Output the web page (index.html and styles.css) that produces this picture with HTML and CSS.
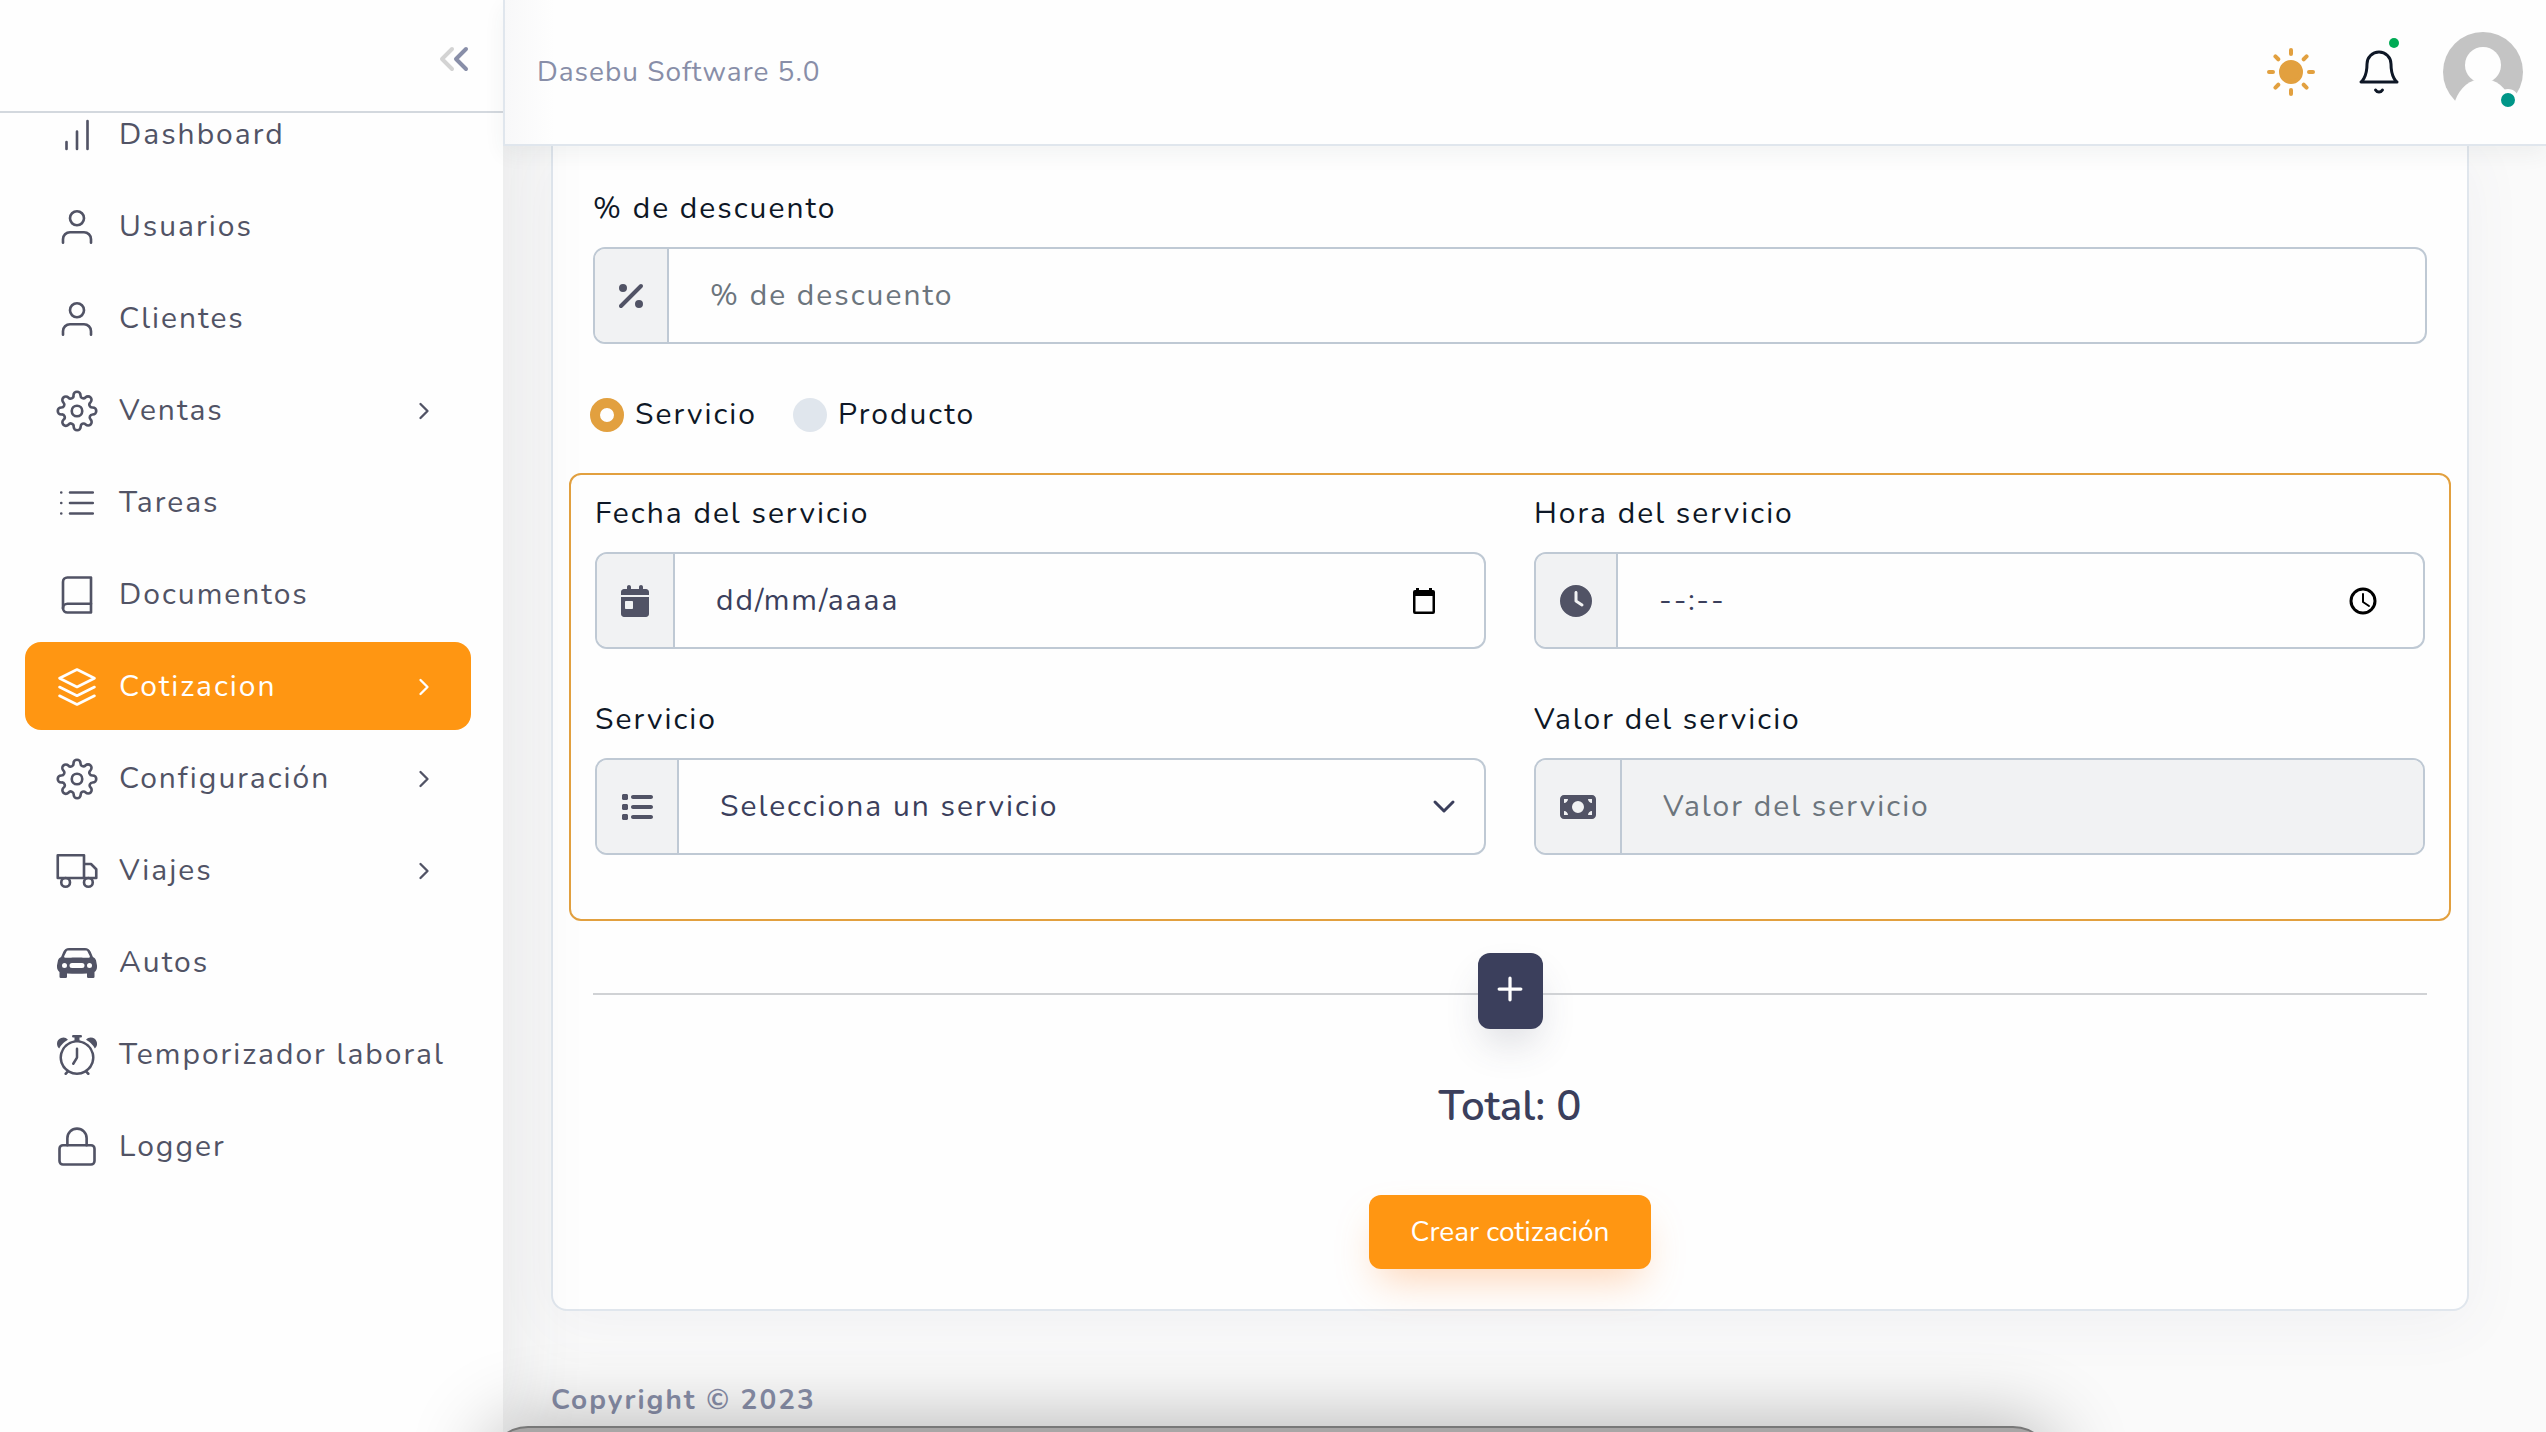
FILE: index.html
```html
<!DOCTYPE html>
<html lang="es">
<head>
<meta charset="utf-8">
<meta name="viewport" content="width=device-width, initial-scale=1">
<title>Cotización - Dasebu Software</title>
<link rel="stylesheet" href="styles.css">
</head>
<body>
<div class="layout">
  <aside class="sidebar">
    <div class="sidebar-head">
      <button class="icon-button collapse" type="button" aria-label="Contraer menú">
        <svg class="icon-lg" viewBox="0 0 24 24"><path class="collapse-far" d="M11 17 6 12l5-5"/><path d="M18 17l-5-5 5-5"/></svg>
      </button>
    </div>
    <nav class="menu">
      <a class="menu-item" href="#"><svg class="icon" viewBox="0 0 24 24"><path d="M12 20V10M18 20V4M6 20v-4"/></svg><span>Dashboard</span></a>
      <a class="menu-item" href="#"><svg class="icon" viewBox="0 0 24 24"><path d="M20 21v-2a4 4 0 0 0-4-4H8a4 4 0 0 0-4 4v2"/><circle cx="12" cy="7" r="4"/></svg><span>Usuarios</span></a>
      <a class="menu-item" href="#"><svg class="icon" viewBox="0 0 24 24"><path d="M20 21v-2a4 4 0 0 0-4-4H8a4 4 0 0 0-4 4v2"/><circle cx="12" cy="7" r="4"/></svg><span>Clientes</span></a>
      <a class="menu-item" href="#"><svg class="icon" viewBox="0 0 24 24"><circle cx="12" cy="12" r="3"/><path d="M19.4 15a1.65 1.65 0 0 0 .33 1.82l.06.06a2 2 0 1 1-2.83 2.83l-.06-.06a1.65 1.65 0 0 0-2.8 1.18V21a2 2 0 0 1-4 0v-.09a1.65 1.65 0 0 0-2.98-1.09l-.06.06a2 2 0 1 1-2.83-2.83l.06-.06A1.65 1.65 0 0 0 3.09 14H3a2 2 0 0 1 0-4h.09A1.65 1.65 0 0 0 4.27 7.18l-.06-.06a2 2 0 1 1 2.83-2.83l.06.06A1.65 1.65 0 0 0 10 3.09V3a2 2 0 0 1 4 0v.09a1.65 1.65 0 0 0 2.82 1.18l.06-.06a2 2 0 1 1 2.83 2.83l-.06.06A1.65 1.65 0 0 0 20.91 10H21a2 2 0 0 1 0 4h-.09a1.65 1.65 0 0 0-1.51 1z"/></svg><span>Ventas</span><svg class="icon-sm" viewBox="0 0 24 24"><path d="m9 18 6-6-6-6"/></svg></a>
      <a class="menu-item" href="#"><svg class="icon" viewBox="0 0 24 24"><path d="M8 6h13M8 12h13M8 18h13M3 6h.01M3 12h.01M3 18h.01"/></svg><span>Tareas</span></a>
      <a class="menu-item" href="#"><svg class="icon" viewBox="0 0 24 24"><path d="M4 19.5A2.5 2.5 0 0 1 6.500 17H20"/><path d="M6.500 2H20v20H6.500A2.500 2.500 0 0 1 4 19.500v-15A2.500 2.500 0 0 1 6.500 2z"/></svg><span>Documentos</span></a>
      <a class="menu-item active" href="#" aria-current="page"><svg class="icon" viewBox="0 0 24 24"><path d="M12 2 2 7l10 5 10-5-10-5zM2 17l10 5 10-5M2 12l10 5 10-5"/></svg><span>Cotizacion</span><svg class="icon-sm" viewBox="0 0 24 24"><path d="m9 18 6-6-6-6"/></svg></a>
      <a class="menu-item" href="#"><svg class="icon" viewBox="0 0 24 24"><circle cx="12" cy="12" r="3"/><path d="M19.4 15a1.65 1.65 0 0 0 .33 1.82l.06.06a2 2 0 1 1-2.83 2.83l-.06-.06a1.65 1.65 0 0 0-2.8 1.18V21a2 2 0 0 1-4 0v-.09a1.65 1.65 0 0 0-2.98-1.09l-.06.06a2 2 0 1 1-2.83-2.83l.06-.06A1.65 1.65 0 0 0 3.09 14H3a2 2 0 0 1 0-4h.09A1.65 1.65 0 0 0 4.27 7.18l-.06-.06a2 2 0 1 1 2.83-2.83l.06.06A1.65 1.65 0 0 0 10 3.09V3a2 2 0 0 1 4 0v.09a1.65 1.65 0 0 0 2.82 1.18l.06-.06a2 2 0 1 1 2.83 2.83l-.06.06A1.65 1.65 0 0 0 20.91 10H21a2 2 0 0 1 0 4h-.09a1.65 1.65 0 0 0-1.51 1z"/></svg><span>Configuración</span><svg class="icon-sm" viewBox="0 0 24 24"><path d="m9 18 6-6-6-6"/></svg></a>
      <a class="menu-item" href="#"><svg class="icon" viewBox="0 0 24 24"><path d="M1 3h15v13H1zM16 8h4l3 3v5h-7z"/><circle cx="5.500" cy="18.500" r="2.500"/><circle cx="18.500" cy="18.500" r="2.500"/></svg><span>Viajes</span><svg class="icon-sm" viewBox="0 0 24 24"><path d="m9 18 6-6-6-6"/></svg></a>
      <a class="menu-item" href="#"><svg class="icon solid" viewBox="0 0 16 16"><path fill-rule="evenodd" d="M2.520 3.515A2.500 2.500 0 0 1 4.820 2h6.362c1 0 1.904.596 2.298 1.515l.792 1.848c.075.175.21.319.38.404.5.25.855.715.965 1.262l.335 1.679q.05.242.049.49v.413c0 .814-.39 1.543-1 1.997V13.500a.5.5 0 0 1-.5.5h-2a.5.5 0 0 1-.5-.5v-1.338c-1.292.048-2.745.088-4 .088s-2.708-.04-4-.088V13.500a.5.5 0 0 1-.5.5h-2a.5.5 0 0 1-.5-.5v-1.892c-.61-.454-1-1.183-1-1.997v-.413a2.500 2.500 0 0 1 .049-.49l.335-1.680c.11-.546.465-1.012.964-1.261a.8.8 0 0 0 .381-.404zM3 10a1 1 0 1 0 0-2 1 1 0 0 0 0 2m10 0a1 1 0 1 0 0-2 1 1 0 0 0 0 2M6 8a1 1 0 0 0 0 2h4a1 1 0 1 0 0-2zM2.906 5.189a.51.51 0 0 0 .497.731c.91-.073 3.350-.17 4.597-.17s3.688.097 4.597.17a.51.51 0 0 0 .497-.731l-.956-1.913A.5.5 0 0 0 11.691 3H4.309a.5.5 0 0 0-.447.276z"/></svg><span>Autos</span></a>
      <a class="menu-item" href="#"><svg class="icon solid" viewBox="0 0 16 16"><path d="M8.500 5.500a.5.5 0 0 0-1 0v3.362l-1.429 2.380a.5.5 0 1 0 .858.515l1.500-2.500A.5.5 0 0 0 8.500 9zM6.500 0a.5.5 0 0 0 0 1H7v1.070a7.001 7.001 0 0 0-3.273 12.474l-.602.602a.5.5 0 0 0 .707.708l.746-.746A6.970 6.970 0 0 0 8 16a6.970 6.970 0 0 0 3.422-.892l.746.746a.5.5 0 0 0 .707-.708l-.601-.602A7.001 7.001 0 0 0 9 2.070V1h.5a.5.5 0 0 0 0-1zm1.038 3.018a6 6 0 0 1 .924 0 6 6 0 1 1-.924 0M0 3.500c0 .753.333 1.429.86 1.887A8.040 8.040 0 0 1 4.387 1.860 2.500 2.500 0 0 0 0 3.500M13.500 1c-.753 0-1.429.333-1.887.86a8.040 8.040 0 0 1 3.527 3.527A2.500 2.500 0 0 0 13.500 1"/></svg><span>Temporizador laboral</span></a>
      <a class="menu-item" href="#"><svg class="icon" viewBox="0 0 24 24"><rect x="2" y="11" width="20" height="11" rx="2"/><path d="M6.500 11V7a5.500 5.500 0 0 1 11 0v4"/></svg><span>Logger</span></a>
    </nav>
  </aside>

  <div class="page">
    <header class="topbar">
      <span class="brand">Dasebu Software 5.0</span>
      <div class="tools">
        <button class="icon-button sun" type="button" aria-label="Cambiar tema">
          <svg class="icon-lg" viewBox="0 0 24 24"><circle cx="12" cy="12" r="5"/><path d="M12 1v2M12 21v2M4.220 4.220l1.420 1.420M18.360 18.360l1.420 1.420M1 12h2M21 12h2M4.220 19.780l1.420-1.420M18.360 5.640l1.420-1.420"/></svg>
        </button>
        <button class="icon-button bell" type="button" aria-label="Notificaciones">
          <svg class="icon-lg" viewBox="0 0 24 24"><path d="M18 8A6 6 0 0 0 6 8c0 7-3 9-3 9h18s-3-2-3-9M13.730 21a2 2 0 0 1-3.460 0"/></svg>
          <span class="bell-dot"></span>
        </button>
        <button class="icon-button avatar" type="button" aria-label="Perfil">
          <svg viewBox="0 0 80 80"><circle cx="40" cy="40" r="40" fill="#c4c4c4"/><circle cx="40" cy="33" r="18" fill="#fefefe"/><path d="M12 69C17 55 27 47 40 47s23 8 28 22l-6 12H12z" fill="#fefefe"/></svg>
          <span class="status-dot"></span>
        </button>
      </div>
    </header>

    <main class="content">
      <form class="card">
        <div class="field">
          <label for="descuento">% de descuento</label>
          <div class="group">
            <span class="addon"><svg width="24" height="32" viewBox="0 0 384 512"><path d="M374.600 118.600c12.500-12.500 12.500-32.800 0-45.300s-32.800-12.500-45.300 0l-320 320c-12.500 12.500-12.500 32.800 0 45.300s32.800 12.500 45.300 0zM128 128a64 64 0 1 0-128 0 64 64 0 1 0 128 0M384 384a64 64 0 1 0-128 0 64 64 0 1 0 128 0"/></svg></span>
            <input id="descuento" type="text" placeholder="% de descuento">
          </div>
        </div>

        <div class="choices">
          <label class="choice"><input type="radio" name="tipo" checked>Servicio</label>
          <label class="choice"><input type="radio" name="tipo">Producto</label>
        </div>

        <div class="item-box">
          <div class="field">
            <label for="fecha">Fecha del servicio</label>
            <div class="group">
              <span class="addon"><svg width="28" height="32" viewBox="0 0 448 512"><path fill-rule="evenodd" d="M128 0c17.700 0 32 14.300 32 32v32h128V32c0-17.700 14.300-32 32-32s32 14.300 32 32v32h48c26.500 0 48 21.500 48 48v48H0v-48c0-26.500 21.500-48 48-48h48V32c0-17.700 14.300-32 32-32M0 192h448v272c0 26.500-21.500 48-48 48H48c-26.500 0-48-21.500-48-48zm80 64c-8.800 0-16 7.200-16 16v96c0 8.800 7.200 16 16 16h96c8.800 0 16-7.200 16-16v-96c0-8.800-7.200-16-16-16z"/></svg></span>
              <input class="dated" id="fecha" type="text" placeholder="dd/mm/aaaa">
              <svg class="picker" viewBox="0 0 28 28"><path fill="#000" fill-rule="evenodd" d="M6 1h3v2h10V1h3v2h1a2 2 0 0 1 2 2v20a2 2 0 0 1-2 2H5a2 2 0 0 1-2-2V5a2 2 0 0 1 2-2h1zM5.500 9v15.500h17V9z"/></svg>
            </div>
          </div>
          <div class="field">
            <label for="hora">Hora del servicio</label>
            <div class="group">
              <span class="addon"><svg width="32" height="32" viewBox="0 0 512 512"><path fill-rule="evenodd" d="M256 0a256 256 0 1 1 0 512 256 256 0 1 1 0-512m-24 120v136c0 8 4 15.500 10.700 20l96 64c11 7.400 25.900 4.400 33.300-6.700s4.400-25.900-6.700-33.300L280 243.200V120c0-13.300-10.700-24-24-24s-24 10.700-24 24"/></svg></span>
              <input class="dated" id="hora" type="text" placeholder="--:--">
              <svg class="picker" viewBox="0 0 28 28"><g fill="none" stroke="#000"><circle cx="14" cy="14" r="12" stroke-width="3"/><path d="M14 7v8l6 4" stroke-width="2"/></g></svg>
            </div>
          </div>
          <div class="field">
            <label for="servicio">Servicio</label>
            <div class="group">
              <span class="addon"><svg width="32" height="32" viewBox="0 0 512 512"><path d="M40 48c-13.300 0-24 10.700-24 24v48c0 13.300 10.700 24 24 24h48c13.300 0 24-10.700 24-24V72c0-13.300-10.700-24-24-24zm152 16c-17.700 0-32 14.300-32 32s14.300 32 32 32h288c17.700 0 32-14.300 32-32s-14.300-32-32-32zm0 160c-17.700 0-32 14.300-32 32s14.300 32 32 32h288c17.700 0 32-14.300 32-32s-14.300-32-32-32zm0 160c-17.700 0-32 14.300-32 32s14.300 32 32 32h288c17.700 0 32-14.300 32-32s-14.300-32-32-32zM16 232v48c0 13.300 10.700 24 24 24h48c13.300 0 24-10.700 24-24v-48c0-13.300-10.700-24-24-24H40c-13.300 0-24 10.700-24 24m24 136c-13.300 0-24 10.700-24 24v48c0 13.300 10.700 24 24 24h48c13.300 0 24-10.700 24-24v-48c0-13.300-10.700-24-24-24z"/></svg></span>
              <select id="servicio"><option>Selecciona un servicio</option></select>
              <svg class="caret" viewBox="0 0 24 24"><path d="m3 7 9 9 9-9"/></svg>
            </div>
          </div>
          <div class="field">
            <label for="valor">Valor del servicio</label>
            <div class="group">
              <span class="addon"><svg width="36" height="32" viewBox="0 0 576 512"><path fill-rule="evenodd" d="M64 64C28.700 64 0 92.700 0 128v256c0 35.300 28.700 64 64 64h448c35.300 0 64-28.700 64-64V128c0-35.300-28.700-64-64-64zm64 320H64v-64c35.300 0 64 28.700 64 64M64 192v-64h64c0 35.300-28.700 64-64 64m384 192c0-35.300 28.700-64 64-64v64zm64-192c-35.300 0-64-28.700-64-64h64zM288 160a96 96 0 1 1 0 192 96 96 0 1 1 0-192"/></svg></span>
              <input id="valor" type="text" placeholder="Valor del servicio" disabled>
            </div>
          </div>
        </div>

        <div class="add-row">
          <hr>
          <button class="add" type="button" aria-label="Agregar"><svg class="plus" viewBox="0 0 24 24"><path d="M12 2v20M2 12h20"/></svg></button>
          <hr>
        </div>

        <h2 class="total">Total: 0</h2>
        <button class="submit" type="submit">Crear cotización</button>
      </form>
    </main>

    <footer class="footer">Copyright © 2023</footer>
  </div>
</div>
<div class="dock" aria-hidden="true"></div>
</body>
</html>
```
FILE: styles.css
```css
* { box-sizing: border-box; }

body {
  margin: 0;
  font-family: Nunito, "Noto Sans", sans-serif;
  font-size: 30px;
  line-height: 40px;
  letter-spacing: 2px;
  color: #0e1726;
  background: #fafafa;
}

input, select, button { font: inherit; }
input, select { letter-spacing: inherit; }

svg {
  display: block;
  flex: none;
  fill: none;
  stroke: currentColor;
  stroke-linecap: round;
  stroke-linejoin: round;
}

.layout {
  display: flex;
  min-height: 100vh;
  overflow: hidden;
}

/* Sidebar */
.sidebar {
  position: relative;
  flex: none;
  width: 503px;
  background: #fefefe;
  box-shadow: 0 0 80px rgba(59, 63, 72, 0.12);
}

.sidebar-head {
  position: relative;
  z-index: 1;
  display: flex;
  justify-content: flex-end;
  align-items: center;
  height: 113px;
  padding: 6px 25px 0 0;
  border-bottom: 2px solid #d3d8de;
  background: #fefefe;
}

.icon-button {
  position: relative;
  padding: 0;
  border: 0;
  background: none;
  color: inherit;
}

.icon-lg { width: 48px; height: 48px; stroke-width: 2; }
.collapse { color: #888ea8; }
.collapse-far { stroke: #d3d3d3; }

/* The list is scrolled slightly under the header */
.menu {
  display: flex;
  flex-direction: column;
  gap: 4px;
  margin-top: -23px;
  padding: 0 32px 0 25px;
}

.menu-item {
  display: flex;
  align-items: center;
  height: 88px;
  padding: 2px 31px 0;
  border-radius: 16px;
  color: #515365;
  text-decoration: none;
}
.menu-item span { flex: 1; white-space: nowrap; }
.menu-item.active { background: #ff9612; color: #fff; }

.icon { width: 42px; height: 42px; margin-right: 21px; stroke-width: 1.5; }
.icon.solid { width: 40px; height: 40px; margin: 0 22px 0 1px; fill: currentColor; stroke: none; }
.icon-sm { width: 28px; height: 28px; margin-right: 2px; stroke-width: 2; }

/* Page */
.page {
  flex: 1;
  min-width: 0;
  display: flex;
  flex-direction: column;
}

.topbar {
  position: relative;
  z-index: 1;
  display: flex;
  justify-content: space-between;
  align-items: center;
  height: 146px;
  padding: 0 23px 0 32px;
  border: solid #e0e6ed;
  border-width: 0 0 2px 2px;
  background: linear-gradient(90deg, #f8f8f9, #fefefe 50px);
  box-shadow: 0 8px 20px rgba(59, 63, 72, 0.06);
}
.brand { font-size: 28px; letter-spacing: 1px; color: #888ea8; }
.tools { display: flex; align-items: center; gap: 40px; }
.sun { color: #e2a03f; }
.sun circle { fill: currentColor; }
.bell { color: #0e1726; }
.bell svg { stroke-width: 1.5; }
.bell-dot {
  position: absolute;
  top: -10px;
  right: 4px;
  width: 10px;
  height: 10px;
  border-radius: 50%;
  background: #00ab55;
}
.avatar svg { width: 80px; height: 80px; stroke: none; }
.status-dot {
  position: absolute;
  right: 4px;
  bottom: 1px;
  width: 22px;
  height: 22px;
  border: 4px solid #fefefe;
  border-radius: 50%;
  background: #009688;
}

.content { padding: 0 77px 0 48px; }

.card {
  padding: 43px 40px 40px;
  border: 2px solid #e0e6ed;
  border-top: 0;
  border-radius: 0 0 16px 16px;
  background: #fefefe;
  box-shadow: 0 12px 60px rgba(85, 85, 120, 0.06);
}

.field label {
  display: block;
  margin-bottom: 18px;
}

.group {
  position: relative;
  display: flex;
  height: 97px;
  border: 2px solid #bfc9d4;
  border-radius: 12px;
  overflow: hidden;
  background: #fefefe;
}
.addon {
  display: flex;
  align-items: center;
  padding: 0 24px;
  border-right: 2px solid #bfc9d4;
  background: #f1f2f3;
  color: #515365;
}
.addon svg { fill: currentColor; stroke: none; }

.group input, .group select {
  flex: 1;
  min-width: 0;
  padding: 0 41px;
  border: 0;
  border-radius: 0;
  outline: 0;
  background: transparent;
  color: #3b3f5c;
  appearance: none;
}
.group input::placeholder { color: #6c757d; opacity: 1; }
.group .dated::placeholder { color: #3b3f5c; }
.group input:disabled { background: #f1f2f3; }

.picker, .caret {
  position: absolute;
  top: 0;
  bottom: 0;
  margin: auto 0;
  pointer-events: none;
}
.picker { right: 46px; width: 28px; height: 28px; stroke: none; }
.caret { right: 28px; width: 24px; height: 24px; color: #3b3f5c; stroke-width: 3; }

.choices {
  display: flex;
  gap: 36px;
  margin: 51px 0 38px -3px;
}
.choice {
  display: flex;
  align-items: center;
  gap: 11px;
}
.choice input {
  width: 34px;
  height: 34px;
  margin: 0;
  border-radius: 50%;
  background: #e0e6ed;
  appearance: none;
}
.choice input:checked { border: 10px solid #e2a03f; background: #fefefe; }

.item-box {
  display: grid;
  grid-template-columns: 1fr 1fr;
  gap: 51px 48px;
  margin: 0 -24px;
  padding: 19px 24px 64px;
  border: 2px solid #e2a03f;
  border-radius: 12px;
}

.add-row {
  display: flex;
  align-items: center;
  margin-top: 32px;
}
.add-row hr {
  flex: 1;
  height: 2px;
  margin: 6px 0 0;
  border: 0;
  background: #d0d2d5;
}
.add {
  display: flex;
  justify-content: center;
  width: 65px;
  height: 76px;
  padding: 23px 0 0;
  border: 0;
  border-radius: 12px;
  background: #3b3f5c;
  color: #fff;
  box-shadow: 0 20px 40px -8px rgba(59, 63, 92, 0.2);
}
.plus { width: 26px; height: 26px; stroke-width: 3; }

.total {
  margin: 54px 0 64px;
  font-size: 42px;
  font-weight: 600;
  line-height: 48px;
  letter-spacing: normal;
  text-align: center;
  color: #3b3f5c;
}

.submit {
  display: block;
  margin: 0 auto;
  height: 74px;
  padding: 0 42px;
  border: 0;
  border-radius: 12px;
  background: #ff9612;
  color: #fff;
  font-size: 28px;
  box-shadow: 0 20px 40px -10px rgba(255, 150, 72, 0.4);
}

.footer {
  padding: 69px 48px 0;
  font-size: 28px;
  font-weight: 700;
  color: #888ea8;
}

/* Edge of the system dock with its shadow */
.dock {
  position: fixed;
  left: 488px;
  right: 493px;
  bottom: -94px;
  height: 100px;
  border: 2px solid #787878;
  border-radius: 40px;
  background: #a8a6a6;
  box-shadow: 0 0 80px rgba(0, 0, 0, 0.3);
}
```
